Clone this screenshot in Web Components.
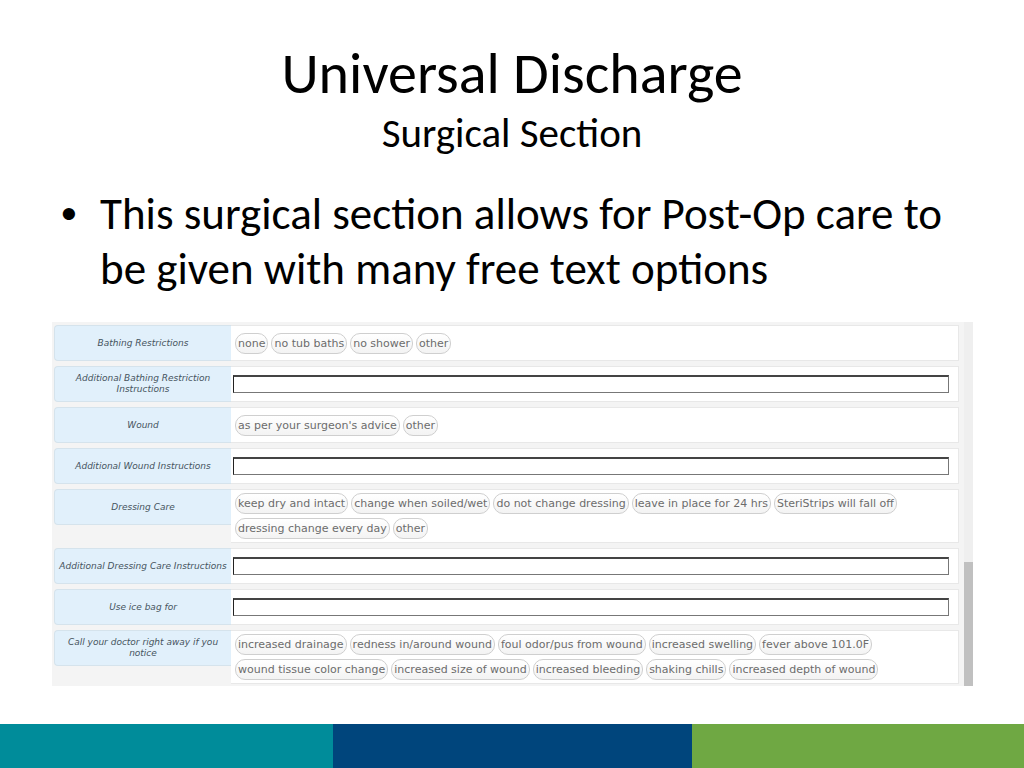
<!DOCTYPE html>
<html lang="en">
<head>
<meta charset="utf-8">
<title>Universal Discharge</title>
<style>
  body { margin: 0; background: #fff; color: #000; font-family: Carlito, Lato, sans-serif; }
</style>
</head>
<body>
<slide-page>
  <slide-title slot="title">Universal Discharge<span slot="subtitle">Surgical Section</span></slide-title>
  <bullet-list><span>This surgical section allows for Post-Op care to be given with many free text options</span></bullet-list>
  <form-panel>
    <choice-row label="Bathing Restrictions">
      <choice-chip>none</choice-chip><choice-chip>no tub baths</choice-chip><choice-chip>no shower</choice-chip><choice-chip>other</choice-chip>
    </choice-row>
    <text-row label="Additional Bathing Restriction Instructions"></text-row>
    <choice-row label="Wound">
      <choice-chip>as per your surgeon's advice</choice-chip><choice-chip>other</choice-chip>
    </choice-row>
    <text-row label="Additional Wound Instructions"></text-row>
    <choice-row label="Dressing Care">
      <choice-chip>keep dry and intact</choice-chip><choice-chip>change when soiled/wet</choice-chip><choice-chip>do not change dressing</choice-chip><choice-chip>leave in place for 24 hrs</choice-chip><choice-chip>SteriStrips will fall off</choice-chip><choice-chip>dressing change every day</choice-chip><choice-chip>other</choice-chip>
    </choice-row>
    <text-row label="Additional Dressing Care Instructions"></text-row>
    <text-row label="Use ice bag for"></text-row>
    <choice-row label="Call your doctor right away if you notice">
      <choice-chip>increased drainage</choice-chip><choice-chip>redness in/around wound</choice-chip><choice-chip>foul odor/pus from wound</choice-chip><choice-chip>increased swelling</choice-chip><choice-chip>fever above 101.0F</choice-chip><choice-chip>wound tissue color change</choice-chip><choice-chip>increased size of wound</choice-chip><choice-chip>increased bleeding</choice-chip><choice-chip>shaking chills</choice-chip><choice-chip>increased depth of wound</choice-chip>
    </choice-row>
  </form-panel>
  <color-band slot="footer"></color-band>
</slide-page>
<script>
  const define = (name, render, ready) => customElements.define(name, class extends HTMLElement {
    constructor() { super(); this.attachShadow({ mode: 'open' }); }
    connectedCallback() {
      this.shadowRoot.innerHTML = render(this);
      if (ready) ready(this);
    }
  });

  define('slide-page', () => `
    <style>
      :host { display: flex; flex-direction: column; min-height: 100vh; }
      header { padding-top: 39px; }
      main { padding: 0 51px 38px 52px; }
      footer { margin-top: auto; }
    </style>
    <header><slot name="title"></slot></header>
    <main><slot></slot></main>
    <footer><slot name="footer"></slot></footer>`);

  define('slide-title', () => `
    <style>
      :host { display: block; text-align: center; }
      h1, p { margin: 0; font-weight: 400; }
      h1 { font-size: 58px; line-height: 70px; }
      p { font-size: 41px; line-height: 48px; }
    </style>
    <h1><slot></slot></h1>
    <p><slot name="subtitle"></slot></p>`);

  define('bullet-list', () => `
    <style>
      :host { display: block; padding: 29px 0 26px; font-size: 45px; line-height: 55px; }
      ul { list-style: none; margin: 0; padding: 0; }
      li { display: grid; grid-template-columns: 39px 1fr; padding-left: 9px; }
      li::before { content: "•"; font-family: "Liberation Sans", sans-serif; }
    </style>
    <ul><li><slot></slot></li></ul>`);

  define('form-panel', () => `
    <style>
      :host { display: grid; grid-template-columns: 1fr 9px; background: #f4f4f4; font-family: "DejaVu Sans", sans-serif; }
      form { display: grid; gap: 5px; padding: 3px 5px 2px 2px; }
      .track { display: grid; grid-template-rows: 66fr 34fr; background: #efefef; }
      .thumb { grid-row: 2; background: #c0c0c0; }
    </style>
    <form><slot></slot></form>
    <div class="track"><div class="thumb"></div></div>`);

  const rowStyle = `
      :host { display: grid; grid-template-columns: 177px 1fr; align-items: start; min-height: 36px; }
      .label { box-sizing: border-box; display: flex; align-items: center; justify-content: center; min-height: 36px;
        padding: 0 3px; border: 1px solid #d5e3ec; border-right: 0; border-radius: 4px 0 0 4px; background: #e1f0fb;
        color: #46545e; font-size: 9px; line-height: 11px; font-style: italic; text-align: center; }
      .value { box-sizing: border-box; align-self: stretch; display: flex; background: #fff; border: 1px solid #e8e8e8; border-left: 0; }`;

  define('choice-row', el => `
    <style>${rowStyle}
      .value { flex-wrap: wrap; align-content: center; gap: 4px 3px; padding: 3px 4px; }
    </style>
    <div class="label" id="name">${el.getAttribute('label')}</div>
    <div class="value" role="group" aria-labelledby="name"><slot></slot></div>`);

  define('text-row', el => `
    <style>${rowStyle}
      .value { align-items: center; padding: 0 9px 0 2px; }
      input { box-sizing: border-box; width: 100%; height: 18px; margin: 0; padding: 0 4px; border: 1px solid #777;
        border-top: 2px solid #444; border-left-color: #222; border-radius: 0; background: #fff; font: inherit; font-size: 11px; }
    </style>
    <label class="label" for="field">${el.getAttribute('label')}</label>
    <div class="value"><input id="field" type="text"></div>`);

  define('choice-chip', () => `
    <style>
      :host { display: block; }
      button { box-sizing: border-box; display: block; height: 21px; margin: 0; padding: 0 2px; border: 1px solid #cfcfcf;
        border-radius: 10px; background: linear-gradient(#fff, #f3f3f3); color: #6c6c6c; font-family: inherit; font-size: 11px;
        line-height: 19px; white-space: nowrap; }
    </style>
    <button type="button" aria-pressed="false"><slot></slot></button>`,
    el => el.shadowRoot.querySelector('button').addEventListener('click', e => {
      const b = e.currentTarget;
      b.setAttribute('aria-pressed', b.getAttribute('aria-pressed') !== 'true');
    }));

  define('color-band', () => `
    <style>
      :host { display: grid; grid-template-columns: 333fr 359fr 332fr; height: 44px; }
      .teal { background: #008c9a; }
      .navy { background: #00457c; }
      .green { background: #6fa843; }
    </style>
    <div class="teal"></div><div class="navy"></div><div class="green"></div>`);
</script>
</body>
</html>
